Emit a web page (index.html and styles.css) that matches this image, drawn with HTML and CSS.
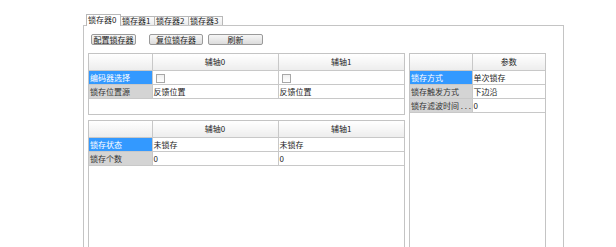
FILE: index.html
```html
<!DOCTYPE html>
<html lang="zh-CN">
  <head>
    <meta charset="UTF-8" />
    <meta name="viewport" content="width=device-width, initial-scale=1.0" />
    <title>锁存器</title>
    <link rel="stylesheet" href="styles.css">
  </head>
  <body>
    <div class="app">
      <div class="tabs">
        <div class="tab active">锁存器0</div>
        <div class="tab">锁存器1</div>
        <div class="tab">锁存器2</div>
        <div class="tab">锁存器3</div>
      </div>
      <div class="frame">
        <div class="toolbar">
          <button class="btn btn-a">配置锁存器</button>
          <button class="btn btn-b">复位锁存器</button>
          <button class="btn btn-c">刷新</button>
        </div>
        <div class="panels">
          <div class="left-col">
            <div class="panel panel-top">
              <table class="grid">
                <colgroup><col class="c-label" /><col class="c-val" /><col class="c-val" /></colgroup>
                <tr class="head"><th></th><th>辅轴0</th><th>辅轴1</th></tr>
                <tr>
                  <td class="label selected">编码器选择</td>
                  <td><span class="check"></span></td>
                  <td><span class="check"></span></td>
                </tr>
                <tr>
                  <td class="label">锁存位置源</td>
                  <td>反馈位置</td>
                  <td>反馈位置</td>
                </tr>
              </table>
            </div>
            <div class="panel panel-bottom">
              <table class="grid">
                <colgroup><col class="c-label" /><col class="c-val" /><col class="c-val" /></colgroup>
                <tr class="head"><th></th><th>辅轴0</th><th>辅轴1</th></tr>
                <tr>
                  <td class="label selected">锁存状态</td>
                  <td>未锁存</td>
                  <td>未锁存</td>
                </tr>
                <tr>
                  <td class="label">锁存个数</td>
                  <td>0</td>
                  <td>0</td>
                </tr>
              </table>
            </div>
          </div>
          <div class="panel panel-right">
            <table class="grid">
              <colgroup><col class="c-plabel" /><col /></colgroup>
              <tr class="head"><th></th><th>参数</th></tr>
              <tr>
                <td class="label selected">锁存方式</td>
                <td>单次锁存</td>
              </tr>
              <tr>
                <td class="label">锁存触发方式</td>
                <td>下边沿</td>
              </tr>
              <tr>
                <td class="label">锁存滤波时间 . . .</td>
                <td>0</td>
              </tr>
            </table>
          </div>
        </div>
      </div>
    </div>
  </body>
</html>
```

FILE: styles.css
```css
html,
body {
  height: 247px;
  overflow: hidden;
}
body {
  margin: 0;
  background: #fff;
  font-family: "Noto Sans CJK SC", "DejaVu Sans", sans-serif;
  font-size: 8px;
  color: #222;
}
.app {
  padding: 15px 0 0 83px;
}
.tabs {
  display: flex;
  align-items: flex-end;
  margin-left: 3px;
  height: 10px;
  position: relative;
  z-index: 1;
}
.tab {
  height: 8px;
  width: 31px;
  line-height: 8px;
  padding: 0 1px;
  border: 1px solid #b8b8b8;
  border-bottom: none;
  background: linear-gradient(#fbfbfb, #ececec);
  margin-left: -1px;
  white-space: nowrap;
  overflow: hidden;
}
.tab:first-child {
  margin-left: 0;
}
.tab.active {
  height: 11px;
  line-height: 9px;
  background: #fff;
  margin-bottom: -1px;
}
.frame {
  display: flex;
  flex-direction: column;
  width: 479px;
  height: 221px;
  border: 1px solid #c4c4c4;
  border-bottom: none;
  background: #fff;
}
.toolbar {
  display: flex;
  padding: 8px 0 0 7px;
  height: 11px;
}
.btn {
  height: 11px;
  padding: 0;
  font: inherit;
  line-height: 9px;
  color: #222;
  border: 1px solid #9a9a9a;
  border-radius: 2px;
  background: linear-gradient(#f6f6f6, #dcdcdc);
  margin-right: 13px;
}
.btn-a {
  width: 45px;
}
.btn-b {
  width: 54px;
  margin-right: 5px;
}
.btn-c {
  width: 55px;
}
.panels {
  flex: 1;
  display: flex;
  gap: 4px;
  margin-top: 8px;
  padding-left: 4px;
}
.left-col {
  display: flex;
  flex-direction: column;
  gap: 5px;
  width: 317px;
}
.panel {
  border: 1px solid #c4c4c4;
  border-bottom: none;
  background: #fff;
}
.panel-top {
  height: 60px;
  border-bottom: 1px solid #c4c4c4;
}
.panel-bottom {
  flex: 1;
}
.panel-right {
  width: 135px;
}
.grid {
  width: 100%;
  border-collapse: collapse;
  table-layout: fixed;
}
.c-label {
  width: 63px;
}
.c-plabel {
  width: 62px;
}
.grid th,
.grid td {
  border: 1px solid #c8c8c8;
  padding: 0 1px;
  white-space: nowrap;
  overflow: hidden;
  text-align: left;
  font-weight: normal;
}
.grid tr {
  height: 14px;
}
.grid tr.head {
  height: 16px;
}
.grid th {
  text-align: center;
  background: linear-gradient(#ffffff, #ededed);
}
.grid tr:first-child th {
  border-top: none;
}
.grid tr th:first-child,
.grid tr td:first-child {
  border-left: none;
}
.grid tr th:last-child,
.grid tr td:last-child {
  border-right: none;
}
.grid td.label {
  background: #d4d4d4;
  color: #333;
}
.grid td.selected {
  background: #3399ff;
  color: #fff;
}
.check {
  display: inline-block;
  width: 7px;
  height: 7px;
  border: 1px solid #a8a8a8;
  background: linear-gradient(#f0f0f0, #fff);
  vertical-align: middle;
  margin-left: 2px;
}
```
